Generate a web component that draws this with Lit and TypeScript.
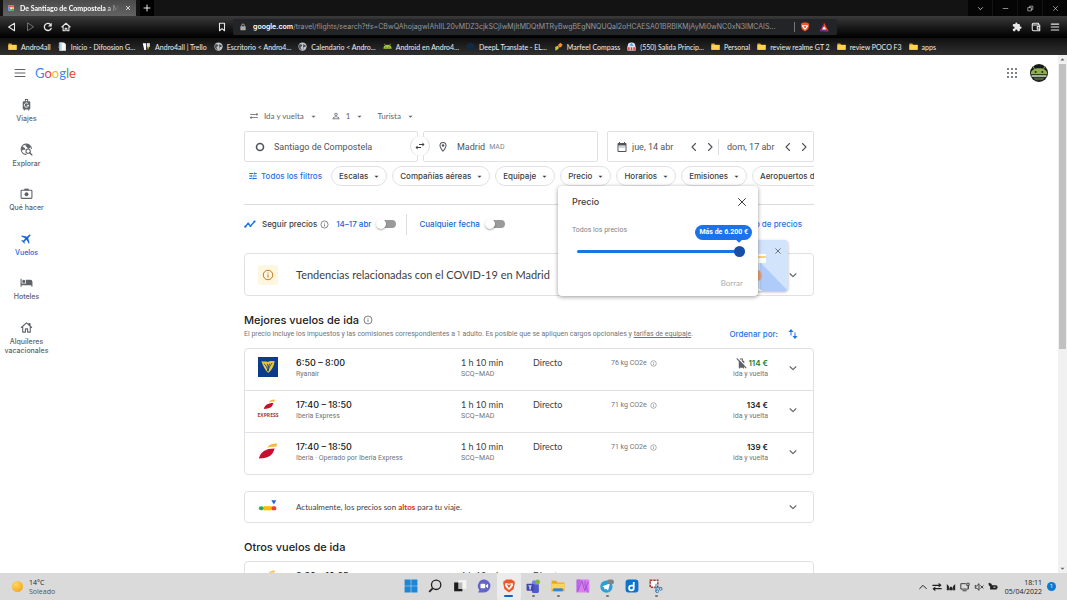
import { LitElement, html, css, svg, nothing } from "lit";
import { customElement, property } from "lit/decorators.js";
import { classMap } from "lit/directives/class-map.js";

const line = (d: string, w = 2) =>
  svg`<path d=${d} fill="none" stroke="currentColor" stroke-width=${w} stroke-linecap="round" stroke-linejoin="round"/>`;
const fill = (d: string, c = "currentColor") => svg`<path d=${d} fill=${c}/>`;

const folder = svg`<path d="M1 4h8l2 3h12v13H1z" fill="#e0a92e"/><path d="M1 8h22v13H1z" fill="#fcd34f"/>`;
const globe = svg`<circle cx="12" cy="12" r="11" fill="#c4c7ca"/><path d="M4 6c5 0 8 1 7 4s-5 2-4 5 3 3 3 6c-5-1-8-5-8-9zM14 3c0 3 2 4 5 4l2 5c-2 2-4 0-6 2s1 5-2 7" fill="#4c5054"/>`;

const icons: Record<string, unknown> = {
  maps: svg`<rect x="1" y="1" width="22" height="22" rx="5" fill="#f4f4f4"/><path d="M1 6a5 5 0 0 1 5-5h12a5 5 0 0 1 5 5v3H1z" fill="#e05548"/><path d="M1 9h8v14H6a5 5 0 0 1-5-5z" fill="#4a8df0"/><path d="M9 16h14v2a5 5 0 0 1-5 5H9z" fill="#3eaa5b"/><path d="M16 9h7v7h-7z" fill="#f2c343"/>`,
  close: line("M5 5l14 14M19 5L5 19"),
  closeBold: line("M5 5l14 14M19 5L5 19", 3.5),
  plus: line("M12 3v18M3 12h18", 3),
  chevron: line("M5 9l7 7 7-7", 2.6),
  minus: line("M4 12h16"),
  restore: line("M4 9h11v11H4zM9 9V4h11v11h-5"),
  back: line("M18 3v18L4 12z", 2.6),
  forward: line("M6 3v18l14-9z", 2.2),
  reload: svg`${line("M19.500 15.500A8.500 8.500 0 1 1 18 6", 3.2)}${fill("M21 2v9h-9z")}`,
  home: line("M2 12L12 3l10 9M5 10v11h5v-6h4v6h5V10", 2.6),
  bookmark: line("M6 3h12v18l-6-5-6 5z", 2.6),
  lock: svg`<rect x="4" y="10" width="16" height="12" rx="1.500" fill="currentColor"/>${line("M8 10V7a4 4 0 0 1 8 0v3", 2.6)}`,
  brave: svg`<path d="M7 1h10l2 2h2l1 4-2 10-8 6-8-6L2 7l1-4h2z" fill="#f1562b"/><path d="M6 7l6 1 6-1 1 4-3 4-4 4-4-4-3-4z" fill="#fff"/><path d="M8 9l4 7 4-7-4 1z" fill="#f1562b"/>`,
  bat: svg`<path d="M12 2L1 22h11z" fill="#9e1f63"/><path d="M12 2l11 20H12z" fill="#ff4724"/><path d="M1 22h22l-11-6z" fill="#662d91"/><path d="M12 10l5 8H7z" fill="#fff"/>`,
  puzzle: fill("M20.500 11H19V7c0-1.100-.9-2-2-2h-4V3.500a2.500 2.500 0 0 0-5 0V5H4c-1.100 0-2 .9-2 2v3.800h1.500a2.700 2.700 0 0 1 0 5.400H2V20c0 1.100.9 2 2 2h3.800v-1.500a2.700 2.700 0 0 1 5.400 0V22H17c1.100 0 2-.9 2-2v-4h1.500a2.500 2.500 0 0 0 0-5z"),
  wallet: line("M3 6c0-2 1-3 3-3h12v4M3 6v12c0 2 1 3 3 3h15V7H4M21 11h-6v6h6", 2.6),
  menu: line("M3 5h18M3 12h18M3 19h18", 2.6),
  hamburger: line("M2 5h20M2 12h20M2 19h20", 2),
  folder,
  globe,
  page: svg`<path d="M4 1h12l5 5v17H4z" fill="#f5f7f9"/><path d="M4 1h6v22H4z" fill="#b9d6e6"/><path d="M1 4h3v2H1zM1 9h3v2H1zM1 14h3v2H1z" fill="#9aa"/>`,
  trello: svg`<path d="M2 3h9v18H6z" fill="#fff"/><path d="M13 3h8v10h-8z" fill="#dedede"/><path d="M14 13h5l-3 9z" fill="#c6c32d"/>`,
  android: svg`<path d="M1 18a11 11 0 0 1 22 0z" fill="#a5c63b"/><path d="M6 9L4 5M18 9l2-4" stroke="#a5c63b" stroke-width="2"/><circle cx="8" cy="14" r="1.300" fill="#222"/><circle cx="16" cy="14" r="1.300" fill="#222"/>`,
  deepl: svg`<path d="M12 1l10 6v10l-10 6-10-6V7z" fill="#0f2b46"/>`,
  marfeel: svg`<path d="M11 7l6-5 6 5-4 7-7-1z" fill="#f4902c"/><path d="M3 13l7-3 4 5-4 4-6 4z" fill="#b6cf3a"/><path d="M11 11l5 2-4 4z" fill="#d84b2c"/>`,
  mail: svg`<path d="M2 10a10 9 0 0 1 20 0v4H2z" fill="#dbe9f7"/><path d="M6 10l6-8 6 8z" fill="#5b9bd5"/><path d="M1 12h22v11H1z" fill="#e9dede"/><path d="M3 14h4v7H3zM10 14h4v7h-4zM17 14h4v7h-4z" fill="#d9393e"/>`,
  apps: svg`${[4, 12, 20].map((y) => [4, 12, 20].map((x) => svg`<circle cx=${x} cy=${y} r="2.200" fill="currentColor"/>`))}`,
  avatar: svg`<circle cx="12" cy="12" r="12" fill="#16181a"/><path d="M1 13.500C1 8 6 5.500 12 5.500S23 8 23 13.500z" fill="#8fb04f"/><path d="M6 6.500L4 3M18 6.500L20 3" stroke="#8fb04f" stroke-width="1.300"/><circle cx="7.500" cy="10.500" r="1.300" fill="#16181a"/><circle cx="16.500" cy="10.500" r="1.300" fill="#16181a"/><path d="M2 15h20v2H2z" fill="#d5e3cb"/><path d="M4 18h16l-3 3.500H7z" fill="#4a5c34"/>`,
  luggage: svg`<path d="M9 2h6v4h2a2 2 0 0 1 2 2v11a2 2 0 0 1-2 2v2h-2v-2H9v2H7v-2a2 2 0 0 1-2-2V8a2 2 0 0 1 2-2h2zm1.800 1.800V6h2.400V3.800z" fill="currentColor" fill-rule="evenodd"/><path d="M15 10.500A4 4 0 1 0 16 13.500h-3.500" fill="none" stroke="#fff" stroke-width="1.800"/>`,
  explore: svg`${line("M11 21A9.500 9.500 0 1 1 21 10", 2)}${fill("M4 6l5 3 1 4-3-1-2 2-3-2zM12 2l-2 3 3 3 2 3 5-3-2-4-4-2z")}<circle cx="15" cy="15" r="4" fill="#fff" stroke="currentColor" stroke-width="2"/>${line("M18 18l4 4", 2.4)}`,
  camera: svg`<rect x="2" y="6" width="20" height="15" rx="1.500" fill="none" stroke="currentColor" stroke-width="2"/><path d="M8 3h8v3H8z" fill="currentColor"/><circle cx="12" cy="13.500" r="3.600" fill="currentColor"/>`,
  plane: svg`<g transform="rotate(45 12 12)"><path d="M22 16v-2l-8.500-5V3.500a1.500 1.500 0 0 0-3 0V9L2 14v2l8.500-2.500V19L8 20.500V22l4-1 4 1v-1.500L13.500 19v-5.500z" fill="currentColor"/></g>`,
  hotel: fill("M7 13a3 3 0 1 0 0-6 3 3 0 0 0 0 6zm12-6h-8v7H3V5H1v15h2v-3h18v3h2v-9a4 4 0 0 0-4-4z"),
  rental: svg`${line("M2.500 12L12 3.500l9.500 8.500M5 10v10.500h5v-6h4v6h5V10M16.500 7V4.500h2V9", 2)}`,
  sync: fill("M22 8l-4-4v3H3v2h15v3zM2 16l4 4v-3h15v-2H6v-3z"),
  person: fill("M12 5.900a2.100 2.100 0 1 1 0 4.200 2.100 2.100 0 0 1 0-4.200m0 9c2.970 0 6.100 1.460 6.100 2.100v1.100H5.900V17c0-.64 3.130-2.100 6.100-2.100M12 4a4 4 0 1 0 0 8 4 4 0 0 0 0-8zm0 9c-2.670 0-8 1.340-8 4v3h16v-3c0-2.660-5.330-4-8-4z"),
  caret: fill("M5 9l7 7 7-7z"),
  origin: svg`<circle cx="12" cy="12" r="7" fill="none" stroke="currentColor" stroke-width="3.200"/>`,
  swap: fill("M6.990 11L3 15l3.990 4v-3H14v-2H6.990zM21 9l-3.990-4v3H10v2h7.010v3z"),
  place: svg`${fill("M12 2a7 7 0 0 0-7 7c0 5.250 7 13 7 13s7-7.750 7-13a7 7 0 0 0-7-7zM7 9a5 5 0 0 1 10 0c0 2.880-2.880 7.190-5 9.880C9.920 16.210 7 11.850 7 9z")}<circle cx="12" cy="9" r="2.500" fill="currentColor"/>`,
  calendar: fill("M19 4h-1V2h-2v2H8V2H6v2H5a2 2 0 0 0-2 2v14a2 2 0 0 0 2 2h14a2 2 0 0 0 2-2V6a2 2 0 0 0-2-2zm0 16H5V9h14zM7 11h2v2H7zm4 0h2v2h-2zm4 0h2v2h-2z"),
  prev: line("M15 5l-7 7 7 7", 2.2),
  next: line("M9 5l7 7-7 7", 2.2),
  tune: fill("M3 17v2h6v-2zM3 5v2h10V5zm10 16v-2h8v-2h-8v-2h-2v6zM7 9v2H3v2h4v2h2V9zm14 4v-2H11v2zm-6-4h2V7h4V5h-4V3h-2z"),
  trend: svg`${line("M2 18l6-7 5 5 8-9", 2.6)}<circle cx="3" cy="17" r="2.200" fill="currentColor"/><circle cx="8.500" cy="11" r="2.200" fill="currentColor"/><circle cx="13" cy="16" r="2.200" fill="currentColor"/><circle cx="21" cy="7" r="2.200" fill="currentColor"/>`,
  info: svg`<circle cx="12" cy="12" r="9.500" fill="none" stroke="currentColor" stroke-width="2"/><path d="M11 11h2v6h-2zM11 7h2v2h-2z" fill="currentColor"/>`,
  sort: svg`${fill("M8 2L3 8h4v7h2V8h4zM16 22l5-6h-4V9h-2v7h-4z")}`,
  noBag: svg`<path d="M8 1h7v5h3v15h-1v2h-2v-2H9v2H7v-2H6V6h2zm2 2v3h3V3z" fill="currentColor" fill-rule="evenodd"/><path d="M4 0l20 20" stroke="#fff" stroke-width="2.500"/><path d="M1.500 1l21 21" stroke="currentColor" stroke-width="2.400"/>`,
  ryanair: svg`<rect width="24" height="24" fill="#0b3c8c"/><path d="M4 5c3 1 5 0 8 1 3-2 6-1 8-1-1 6-4 12-8 14-3-3-6-8-8-14z" fill="#e9c63a"/><path d="M7 8c3 2 4 5 5 9M11 8c1 3 2 5 1 9M17 7c-2 3-4 5-5 10M14 8l-2 5" stroke="#0b3c8c" stroke-width="1" fill="none"/>`,
  express: svg`<path d="M4 17c1-6 7-10 16-10-1 7-6 10-16 10z" fill="#c8102e"/><path d="M12 6c2-3 5-5 11-5l-1 3.500c-3-.5-6 0-10 1.500z" fill="#f7b83c"/>`,
  iberia: svg`<path d="M1 21c2-8 8-12 19-12-2 7-6 12-19 12z" fill="#c8102e"/><path d="M11 8c3-4 6-5 12-5l-1 4c-4-.5-7 0-11 1z" fill="#f7b83c"/>`,
  gauge: svg`<rect x="1" y="11" width="6" height="5" rx="2.500" fill="#34a853"/><rect x="7" y="11" width="9" height="5" fill="#fbbc04"/><rect x="16" y="11" width="6" height="5" rx="2" fill="#ea4335"/><path d="M16 4h6l-3 5z" fill="#1967d2"/>`,
  windows: svg`<path d="M1 1h10.500v10.500H1zM12.500 1H23v10.500H12.500zM1 12.500h10.500V23H1zM12.500 12.500H23V23H12.500z" fill="#1b87d6"/>`,
  search: svg`<circle cx="14" cy="10" r="8" fill="none" stroke="#222" stroke-width="2.200"/><path d="M8 16l-6 6" stroke="#222" stroke-width="3"/>`,
  tasks: svg`<path d="M9 2h14v15H9z" fill="#f4f4f4"/><path d="M2 6h14v15H2z" fill="#bbb"/><path d="M2 6h7v11h7v4H2z" fill="#1d1d1d"/>`,
  chat: svg`<path d="M12 1a11 11 0 0 1 0 22H2l2-4A11 11 0 0 1 12 1z" fill="#6264c7"/><rect x="6" y="8" width="8" height="8" rx="1.500" fill="#fff"/><path d="M15 11l4-3v8l-4-3z" fill="#fff"/>`,
  teams: svg`<circle cx="14" cy="6" r="4" fill="#7b83eb"/><path d="M8 9h14v9a6 6 0 0 1-12 3z" fill="#5059c9"/><rect x="1" y="8" width="12" height="12" rx="1" fill="#4048b0"/><path d="M4 11h6v1.500H8V18H6v-5.500H4z" fill="#fff"/><circle cx="20" cy="5" r="4" fill="#7fba28"/>`,
  explorer: svg`<path d="M1 3h8l2 3h12v15H1z" fill="#e8a71f"/><path d="M1 8h22v9H1z" fill="#fcd45a"/><path d="M4 16h16v5H4z" fill="#2a86d8"/>`,
  affinity: svg`<rect x="1" y="1" width="22" height="22" rx="2" fill="#dd7df0"/><path d="M1 1h7L3 23H1zM16 1l6 22h-3L13 8z" fill="#b46ae6"/><path d="M3 21L10 3l5 17 6-15" fill="none" stroke="#8a46c4" stroke-width="1.200"/>`,
  telegram: svg`<circle cx="11" cy="13" r="10.500" fill="#2b9fd9"/><path d="M4 12.500l13-5-3 12-4-3-2 2-1-4z" fill="#fff"/><rect x="12" y="1" width="12" height="8" rx="4" fill="#7d858b"/>`,
  dapp: svg`<rect x="1" y="1" width="22" height="22" rx="5" fill="#0b72d0"/><path d="M15 5v10.500a4 4 0 1 1-4-4h4" fill="none" stroke="#fff" stroke-width="3"/>`,
  snip: svg`<rect x="2" y="2" width="13" height="12" fill="#fff" stroke="#a7332a" stroke-width="2.500" stroke-dasharray="4 1.500"/><path d="M12 8v14M8 15h14" stroke="#4d8fc0" stroke-width="2"/><circle cx="20" cy="17" r="2.500" fill="none" stroke="#2978b5" stroke-width="1.500"/><circle cx="14" cy="21" r="2.500" fill="none" stroke="#2978b5" stroke-width="1.500"/>`,
  up: line("M4 16l8-8 8 8", 2.4),
  arrows: svg`${line("M2 8h17M5 16h17", 3)}${fill("M16 2l7 6-7 5zM8 11l-7 5 7 6z")}`,
  mstat: fill("M2 5l5 5v10H2zM22 5l-5 5v10h5zM8 14l4-3 4 3v6H8z"),
  monitor: svg`${line("M13 4H2v13h18v-6M7 21h8", 2)}${line("M17 3h5v5h-5zM19.500 8v5", 1.800)}`,
  mute: line("M3 9v6h4l5 5V4L7 9zM16 9l6 6M22 9l-6 6", 2),
  battery: svg`<path d="M5 8h16v2h2v5h-2v3H5z" fill="#222"/><path d="M1 3l4-1 1 2h3v5c-3 2-6 1-7-1z" fill="#222"/><path d="M13 11h5v3h-5z" fill="#bbb"/>`,
};

@customElement("ui-icon")
class UiIcon extends LitElement {
  static styles = css`
    :host { display: inline-flex; flex: none; width: 10px; height: 10px; }
    svg { width: 100%; height: 100%; display: block; }
  `;
  @property() name = "";
  render() {
    return html`<svg viewBox="0 0 24 24" aria-hidden="true">${icons[this.name] ?? nothing}</svg>`;
  }
}

const bookmarks: [string, string][] = [
  ["folder", "Andro4all"],
  ["page", "Inicio - Difoosion G..."],
  ["trello", "Andro4all | Trello"],
  ["globe", "Escritorio < Andro4..."],
  ["globe", "Calendario < Andro..."],
  ["android", "Android en Andro4..."],
  ["deepl", "DeepL Translate - EL..."],
  ["marfeel", "Marfeel Compass"],
  ["mail", "(550) Salida Princip..."],
  ["folder", "Personal"],
  ["folder", "review realme GT 2"],
  ["folder", "review POCO F3"],
  ["folder", "apps"],
];

@customElement("browser-chrome")
class BrowserChrome extends LitElement {
  static styles = css`
    :host { display: block; flex: none; color: #e8e8e8; font: 7px/10px Lato, "Noto Sans", sans-serif; }
    button { all: unset; box-sizing: border-box; display: inline-flex; align-items: center; justify-content: center; }
    .tabs { display: flex; height: 16px; background: #131313; }
    .tab { display: flex; align-items: center; gap: 6px; width: 133px; margin-left: 3px; padding: 0 5px; box-sizing: border-box; background: linear-gradient(#4a4a4a, #636363); }
    .tab ui-icon { width: 6px; height: 6px; }
    .tab-title { flex: 1; overflow: hidden; white-space: nowrap; color: #fff; font-weight: 700; mask-image: linear-gradient(90deg, #000 85%, transparent); }
    .new-tab { width: 14px; margin-left: 4px; background: #000; }
    .new-tab ui-icon { width: 8px; height: 8px; }
    .win { margin-left: auto; display: flex; background: #050505; }
    .win button { width: 25px; border-left: 1px solid #141414; }
    .win ui-icon { width: 7px; height: 7px; }
    .toolbar { display: flex; align-items: center; height: 22px; background: linear-gradient(#3a3a3a, #141414 60%, #000); }
    .nav-buttons { display: flex; gap: 8px; padding-left: 7px; width: 210px; box-sizing: border-box; }
    .nav-buttons button, .actions button { width: 10px; height: 12px; }
    .dim { color: #777; }
    .mark { width: 23px; }
    .omnibox { flex: 1; min-width: 0; height: 16px; margin-right: 175px; padding: 0 6px; gap: 6px; border-radius: 2px; background: #232427; display: flex; align-items: center; font: 7px/12px Inter, sans-serif; }
    .omnibox ui-icon { width: 8px; height: 8px; color: #aaa; }
    .omnibox .url { flex: 1; min-width: 0; justify-content: flex-start; overflow: hidden; white-space: nowrap; color: #96989b; }
    .url b { color: #fff; font-weight: 600; }
    .shields { display: flex; gap: 9px; padding: 0 2px 0 5px; border-left: 1px solid #777; }
    .omnibox .shields ui-icon { width: 10px; height: 10px; }
    .actions { display: flex; gap: 9px; padding-right: 7px; }
    .marks { display: flex; align-items: center; gap: 7px; height: 17px; padding: 0 8px; box-sizing: border-box; background: linear-gradient(#101010, #303030); overflow: hidden; }
    .marks a { display: flex; align-items: center; gap: 4px; color: #eee; text-decoration: none; white-space: nowrap; }
    .marks ui-icon { width: 9px; height: 9px; }
  `;
  render() {
    return html`
      <div class="tabs">
        <div class="tab">
          <ui-icon name="maps"></ui-icon>
          <span class="tab-title">De Santiago de Compostela a Madrid</span>
          <button aria-label="Cerrar pestaña"><ui-icon name="closeBold"></ui-icon></button>
        </div>
        <button class="new-tab" aria-label="Nueva pestaña"><ui-icon name="plus"></ui-icon></button>
        <div class="win">
          <button aria-label="Buscar pestañas"><ui-icon name="chevron"></ui-icon></button>
          <button aria-label="Minimizar"><ui-icon name="minus"></ui-icon></button>
          <button aria-label="Restaurar"><ui-icon name="restore"></ui-icon></button>
          <button aria-label="Cerrar"><ui-icon name="close"></ui-icon></button>
        </div>
      </div>
      <div class="toolbar">
        <div class="nav-buttons">
          <button aria-label="Atrás"><ui-icon name="back"></ui-icon></button>
          <button class="dim" aria-label="Adelante"><ui-icon name="forward"></ui-icon></button>
          <button aria-label="Recargar"><ui-icon name="reload"></ui-icon></button>
          <button aria-label="Inicio"><ui-icon name="home"></ui-icon></button>
        </div>
        <button class="mark" aria-label="Añadir a marcadores"><ui-icon name="bookmark"></ui-icon></button>
        <div class="omnibox">
          <ui-icon name="lock"></ui-icon>
          <button class="url"><b>google.com</b>/travel/flights/search?tfs=CBwQAhojagwIAhIIL20vMDZ3cjkSCjIwMjItMDQtMTRyBwgBEgNNQUQaI2oHCAESA01BRBIKMjAyMi0wNC0xN3IMCAIS...</button>
          <span class="shields"><ui-icon name="brave"></ui-icon><ui-icon name="bat"></ui-icon></span>
        </div>
        <div class="actions">
          <button aria-label="Extensiones"><ui-icon name="puzzle"></ui-icon></button>
          <button aria-label="Cartera"><ui-icon name="wallet"></ui-icon></button>
          <button aria-label="Menú"><ui-icon name="menu"></ui-icon></button>
        </div>
      </div>
      <nav class="marks">
        ${bookmarks.map(([i, t]) => html`<a href="#"><ui-icon name=${i}></ui-icon>${t}</a>`)}
      </nav>
    `;
  }
}

@customElement("task-bar")
class TaskBar extends LitElement {
  static styles = css`
    :host { display: grid; grid-template-columns: 1fr 270px 1fr; align-items: center; flex: none; height: 27px; background: #dadada; color: #222; font: 7px/9px "Open Sans", "Noto Sans", sans-serif; }
    button { all: unset; }
    .weather { display: flex; align-items: center; gap: 6px; padding-left: 12px; }
    .sun { width: 11px; height: 11px; border-radius: 50%; background: radial-gradient(circle at 35% 30%, #ffd75a, #f49a10); }
    .muted { color: #555; }
    .apps { display: grid; grid-template-columns: repeat(11, 1fr); height: 27px; }
    .app { display: flex; flex-direction: column; align-items: center; justify-content: flex-end; gap: 2px; padding-bottom: 3px; box-sizing: border-box; }
    .app ui-icon { width: 14px; height: 14px; }
    .app::after { content: ""; width: 3px; height: 2px; border-radius: 1px; }
    .open::after { background: #777; }
    .active { background: #ececec; border-radius: 2px; }
    .active::after { width: 9px; background: #0b66c3; }
    .tray { display: flex; align-items: center; justify-content: flex-end; gap: 4px; padding-right: 11px; }
    .clock { text-align: right; margin: 0 1px 0 3px; }
    .badge { width: 9px; height: 9px; border-radius: 50%; background: #0a79d0; color: #fff; text-align: center; font-size: 6px; }
  `;
  render() {
    const apps: [string, string, string][] = [
      ["windows", "Inicio", ""], ["search", "Buscar", ""], ["tasks", "Vista de tareas", ""], ["chat", "Chat", ""],
      ["brave", "Brave", "active"], ["teams", "Teams", "open"], ["explorer", "Explorador", "open"], ["affinity", "Affinity Photo", ""],
      ["telegram", "Telegram", "open"], ["dapp", "Música", ""], ["snip", "Recortes", "open"],
    ];
    return html`
      <div class="weather"><span class="sun"></span><div>14°C<div class="muted">Soleado</div></div></div>
      <div class="apps">${apps.map(([i, label, c]) => html`<button class=${classMap({ app: true, open: c === "open", active: c === "active" })} aria-label=${label}><ui-icon name=${i}></ui-icon></button>`)}</div>
      <div class="tray">
        ${["up", "arrows", "mstat", "monitor", "mute", "battery"].map((i) => html`<ui-icon name=${i}></ui-icon>`)}
        <div class="clock">18:11<div>05/04/2022</div></div>
        <span class="badge">1</span>
      </div>
    `;
  }
}

const destinations: [string, string][] = [
  ["luggage", "Viajes"], ["explore", "Explorar"], ["camera", "Qué hacer"], ["plane", "Vuelos"], ["hotel", "Hoteles"], ["rental", "Alquileres vacacionales"],
];

const flights = [
  { logo: "ryanair", time: "6:50 – 8:00", carrier: "Ryanair", co2: "76 kg CO2e", price: "114 €", low: true },
  { logo: "express", time: "17:40 – 18:50", carrier: "Iberia Express", co2: "71 kg CO2e", price: "134 €", low: false },
  { logo: "iberia", time: "17:40 – 18:50", carrier: "Iberia · Operado por Iberia Express", co2: "71 kg CO2e", price: "139 €", low: false },
];
const others = [
  { logo: "express", time: "8:30 – 10:35", carrier: "Iberia Express", co2: "71 kg CO2e", price: "134 €", low: false },
];

@customElement("app-root")
class AppRoot extends LitElement {
  static styles = css`
    :host { --display: Lato, "Open Sans", sans-serif; --medium: Inter, "Open Sans", sans-serif; display: flex; flex-direction: column; height: 100vh; overflow: hidden; background: #fff; color: #3c4043; font: 8px/12px var(--display); }
    button { all: unset; box-sizing: border-box; display: inline-flex; align-items: center; justify-content: center; }
    h2, p { margin: 0; font-weight: 400; }
    input { font: inherit; color: inherit; margin: 0; }
    .viewport { flex: 1; min-height: 0; display: flex; }
    .page { flex: 1; min-width: 0; overflow: hidden; }
    .scroll { width: 9px; background: #f1f1f1; display: flex; flex-direction: column; align-items: center; color: #666; }
    .scroll ui-icon { width: 7px; height: 9px; }
    .thumb-area { flex: 1; width: 7px; }
    .thumb { height: 57%; background: #c1c1c1; }
    .flip { transform: rotate(180deg); }

    .top { display: flex; align-items: center; height: 36px; padding: 0 10px 0 14px; gap: 9px; }
    .top ui-icon { width: 12px; height: 12px; color: #5f6368; }
    .logo { flex: 1; font-size: 13px; line-height: 18px; text-decoration: none; }
    .b { color: #4285f4; } .r { color: #ea4335; } .y { color: #fbbc05; } .g { color: #34a853; }
    .top .avatar { width: 18px; height: 18px; margin-left: 3px; }

    .layout { display: grid; grid-template-columns: 53px minmax(0, 570px) 53px; justify-content: space-between; }
    .side { display: grid; grid-template-rows: repeat(6, 1fr); height: 267px; padding-top: 7px; }
    .side a { display: flex; flex-direction: column; align-items: center; gap: 3px; color: #5f6368; text-decoration: none; font: 500 7px/9px var(--medium); text-align: center; }
    .side ui-icon { width: 13px; height: 13px; }
    .side .on { color: #1a66d8; }

    .options { display: flex; gap: 14px; height: 20px; margin: 15px 0 5px 5px; color: #5f6368; }
    .options button { gap: 5px; }
    .options .caret { margin-left: 1px; }
    .caret { width: 7px; height: 7px; }
    .search { display: grid; grid-template-columns: 174fr 175fr 211fr; column-gap: 5px; height: 31px; }
    .field { display: flex; align-items: center; border: 1px solid #dfe1e5; border-radius: 2px; font: 9px/12px Roboto, sans-serif; box-sizing: border-box; min-width: 0; color: #50545a; }
    .field input { border: 0; padding: 0; outline: 0; background: none; field-sizing: content; }
    .from { padding-left: 9px; gap: 8px; }
    .to { padding-left: 13px; gap: 8px; position: relative; }
    .to small { font-size: 7px; color: #80868b; margin-left: -4px; }
    .swap { position: absolute; left: -14px; top: 4px; width: 20px; height: 20px; border-radius: 50%; background: #fff; border-left: 1px solid #dadce0; border-right: 1px solid #dadce0; color: #3c4043; }
    .swap ui-icon, .field ui-icon { width: 12px; height: 12px; }
    .dates { margin-left: 4px; display: grid; grid-template-columns: 110fr 95fr; }
    .date { display: flex; align-items: center; padding: 0 2px 0 8px; gap: 4px; min-width: 0; }
    .date + .date { border-left: 1px solid #dadce0; height: 16px; padding-right: 3px; }
    .field .date input { field-sizing: fixed; flex: 1; min-width: 0; width: 40px; }

    .filters-wrap { position: relative; margin-top: 4px; }
    .filters { display: flex; align-items: center; gap: 5px; overflow: hidden; }
    .filters button { flex: none; white-space: nowrap; font: 500 8px/12px var(--medium); }
    .filters .all { color: #1a73e8; gap: 3px; width: 82px; }
    .filters .pill { height: 20px; border: 1px solid #dfe1e5; border-radius: 10px; padding: 0 6px 0 7px; gap: 5px; }
    .popover { position: absolute; z-index: 3; left: 314px; top: 20px; width: 200px; box-sizing: border-box; background: #fff; border-radius: 4px; box-shadow: 0 1px 4px rgba(0,0,0,.4); padding: 9px 13px 7px 14px; height: 110px; display: flex; flex-direction: column; }
    .pop-head { display: flex; justify-content: space-between; align-items: center; font: 500 9px/14px var(--medium); height: 14px; }
    .pop-head ui-icon { width: 12px; height: 12px; margin-right: -3px; }
    .pop-label { font: 7px/10px Roboto, sans-serif; color: #80868b; margin-top: 16px; }
    .slider { position: relative; margin: 10px 0 0 5px; height: 12px; display: flex; }
    .slider input { appearance: none; width: 100%; height: 12px; background: none; }
    .slider input::-webkit-slider-runnable-track { height: 3px; border-radius: 2px; background: #1a73e8; }
    .slider input::-webkit-slider-thumb { appearance: none; width: 11px; height: 11px; margin-top: -4px; border-radius: 50%; background: #174ea6; }
    .bubble { position: absolute; right: -7px; bottom: 17px; padding: 1px 4px; border-radius: 8px; background: #1a73e8; color: #fff; font: 700 7px/13px Roboto, sans-serif; white-space: nowrap; }
    .bubble::after { content: ""; position: absolute; right: 11px; bottom: -2px; width: 4px; height: 4px; background: #1a73e8; transform: rotate(45deg); }
    .clear { margin-top: auto; align-self: flex-end; color: #aaadb0; padding-right: 2px; }

    .track { position: relative; display: flex; align-items: center; margin-top: 18px; padding-right: 12px; height: 39px; border-top: 1px solid #dadce0; box-sizing: border-box; font: 500 8px/12px var(--medium); }
    .track > ui-icon { width: 12px; height: 12px; color: #1a73e8; margin-right: 6px; }
    .track .info { width: 9px; height: 9px; margin: 0 7px 0 3px; color: #5f6368; }
    .blue { color: #1a73e8; text-decoration: none; }
    .switch { display: flex; align-items: center; gap: 6px; color: #1967d2; }
    .switch input { appearance: none; width: 19px; height: 8px; border-radius: 4px; background: linear-gradient(90deg, transparent 6px, #9a9a9a 6px); position: relative; }
    .switch input::before { content: ""; position: absolute; left: -1px; top: -1px; width: 10px; height: 10px; border-radius: 50%; background: #fff; box-shadow: 0 1px 2px rgba(0,0,0,.35); }
    .bar { width: 1px; height: 21px; background: #dadce0; margin: 0 12px 0 10px; }
    .track .end { margin-left: auto; }
    .promo { position: absolute; z-index: 2; right: 26px; top: 35px; width: 60px; height: 51px; border-radius: 4px; background: #d2e3fc; box-shadow: 0 1px 3px rgba(0,0,0,.3); overflow: hidden; display: flex; justify-content: flex-end; align-items: flex-start; }
    .promo svg { position: absolute; inset: 0; width: 100%; height: 100%; }
    .promo button { position: relative; padding: 7px 6px; }
    .promo ui-icon { width: 8px; height: 8px; }

    .card { border: 1px solid #dfe1e5; border-radius: 4px; }
    .notice { display: grid; grid-template-columns: 51px 1fr 41px; align-items: center; box-sizing: border-box; }
    .notice > :first-child { margin-left: 13px; }
    .chev { justify-self: center; width: 10px; height: 10px; color: #5f6368; }
    .covid { margin-top: 10px; height: 43px; font-size: 11px; }
    .warn { display: flex; align-items: center; justify-content: center; width: 20px; height: 20px; background: #fef7e0; border-radius: 2px; color: #c5761d; }
    .warn ui-icon { width: 12px; height: 12px; }
    h2 { font: 500 11px/16px var(--medium); color: #202124; display: flex; align-items: center; gap: 4px; }
    h2 ui-icon { color: #5f6368; }
    .best { margin-top: 16px; }
    .note { display: flex; align-items: center; justify-content: space-between; height: 10px; margin-top: 1px; padding-right: 15px; }
    .note p { font: 7px/10px Roboto, sans-serif; color: #70757a; }
    .note a { color: inherit; }
    .note button { gap: 9px; color: #1a73e8; font: 500 8px/10px var(--medium); }
    .note ui-icon { width: 12px; height: 12px; }
    .list { margin: 9px 0 0; list-style: none; padding: 0; }
    .row { display: grid; grid-template-columns: 51px 165px 72px 78px 1fr 1fr 45px; height: 41px; padding-top: 8px; box-sizing: border-box; font-size: 9px; }
    .row + .row { border-top: 1px solid #dfe1e5; height: 42px; }
    .row .sub { font: 7px/11px Roboto, sans-serif; color: #70757a; }
    .row .time { font: 500 9px/12px var(--medium); color: #202124; }
    .airline { display: flex; flex-direction: column; align-items: center; width: 20px; margin-left: 13px; font: 700 5px/5px "Open Sans", sans-serif; color: #a33a3a; }
    .airline ui-icon { width: 20px; height: 20px; }
    .airline .small { width: 17px; height: 14px; }
    .row .co2 { display: flex; align-items: center; gap: 3px; height: 12px; }
    .co2 ui-icon { width: 7px; height: 7px; }
    .cost { text-align: right; }
    .price { display: flex; justify-content: flex-end; align-items: center; gap: 1px; font: 600 8px/12px var(--medium); color: #202124; }
    .price ui-icon { width: 11px; height: 11px; color: #5f6368; }
    .price.low { color: #188038; }
    .row .chev { align-self: center; margin: -11px 0 0 4px; }
    .level { margin-top: 16px; height: 32px; }
    .level > ui-icon { width: 20px; height: 20px; }
    .level b { color: #d93025; }
    .other { margin-top: 16px; }
    .more { margin-top: 6px; }
  `;

  flight(f: (typeof flights)[number]) {
    const express = f.logo === "express";
    return html`<li class="row">
      <div class="airline"><ui-icon class=${classMap({ small: express })} name=${f.logo}></ui-icon>${express ? "EXPRESS" : nothing}</div>
      <div><div class="time">${f.time}</div><div class="sub">${f.carrier}</div></div>
      <div>1 h 10 min<div class="sub">SCQ–MAD</div></div>
      <div>Directo</div>
      <div class="sub co2">${f.co2}<ui-icon name="info"></ui-icon></div>
      <div class="cost">
        <div class=${classMap({ price: true, low: f.low })}>${f.low ? html`<ui-icon name="noBag"></ui-icon>` : nothing}${f.price}</div>
        <div class="sub">ida y vuelta</div>
      </div>
      <button class="chev" aria-label="Detalles del vuelo"><ui-icon name="chevron"></ui-icon></button>
    </li>`;
  }

  pill(label: string) {
    return html`<button class="pill">${label}<ui-icon class="caret" name="caret"></ui-icon></button>`;
  }

  date(value: string, name: string, icon: boolean) {
    return html`<div class="date">
      ${icon ? html`<ui-icon name="calendar"></ui-icon>` : nothing}
      <input aria-label=${name} .value=${value} />
      <button aria-label="Día anterior"><ui-icon name="prev"></ui-icon></button>
      <button aria-label="Día siguiente"><ui-icon name="next"></ui-icon></button>
    </div>`;
  }

  render() {
    return html`
      <browser-chrome></browser-chrome>
      <div class="viewport">
        <div class="page">
          <header class="top">
            <button aria-label="Menú principal"><ui-icon name="hamburger"></ui-icon></button>
            <a class="logo" href="#" aria-label="Google"><span class="b">G</span><span class="r">o</span><span class="y">o</span><span class="b">g</span><span class="g">l</span><span class="r">e</span></a>
            <button aria-label="Aplicaciones"><ui-icon name="apps"></ui-icon></button>
            <button aria-label="Cuenta"><ui-icon class="avatar" name="avatar"></ui-icon></button>
          </header>
          <div class="layout">
            <nav class="side">
              ${destinations.map(([i, t]) => html`<a href="#" class=${classMap({ on: i === "plane" })}><ui-icon name=${i}></ui-icon>${t}</a>`)}
            </nav>
            <main>
              <div class="options">
                <button><ui-icon name="sync"></ui-icon>Ida y vuelta<ui-icon class="caret" name="caret"></ui-icon></button>
                <button><ui-icon name="person"></ui-icon>1<ui-icon class="caret" name="caret"></ui-icon></button>
                <button>Turista<ui-icon class="caret" name="caret"></ui-icon></button>
              </div>
              <div class="search">
                <label class="field from"><ui-icon name="origin"></ui-icon><input aria-label="Origen" .value=${"Santiago de Compostela"} /></label>
                <div class="field to">
                  <button class="swap" aria-label="Intercambiar origen y destino"><ui-icon name="swap"></ui-icon></button>
                  <ui-icon name="place"></ui-icon><input aria-label="Destino" .value=${"Madrid"} /><small>MAD</small>
                </div>
                <div class="field dates">${this.date("jue, 14 abr", "Salida", true)}${this.date("dom, 17 abr", "Vuelta", false)}</div>
              </div>
              <div class="filters-wrap">
                <div class="filters">
                  <button class="all"><ui-icon name="tune"></ui-icon>Todos los filtros</button>
                  ${["Escalas", "Compañías aéreas", "Equipaje", "Precio", "Horarios", "Emisiones", "Aeropuertos de conexión"].map((t) => this.pill(t))}
                </div>
                <section class="popover">
                  <div class="pop-head">Precio<button aria-label="Cerrar"><ui-icon name="close"></ui-icon></button></div>
                  <label class="pop-label" for="price">Todos los precios</label>
                  <div class="slider">
                    <input id="price" type="range" min="100" max="6200" value="6200" />
                    <output class="bubble" for="price">Más de 6.200 €</output>
                  </div>
                  <button class="clear">Borrar</button>
                </section>
              </div>
              <div class="track">
                <ui-icon name="trend"></ui-icon>Seguir precios<ui-icon class="info" name="info"></ui-icon>
                <label class="switch">14–17 abr<input type="checkbox" role="switch" /></label>
                <span class="bar"></span>
                <label class="switch">Cualquier fecha<input type="checkbox" role="switch" /></label>
                <a class="blue end" href="#">Gráfico de precios</a>
                <aside class="promo">
                  <svg viewBox="0 0 60 51" aria-hidden="true"><path d="M60 51L32 22v29z" fill="#aecbfa"/><path d="M20 14h18v9H20z" fill="#fff"/><path d="M26 16h12v2H26z" fill="#fbd37a"/><path d="M24 28c6 0 10 4 10 8s-4 6-10 6z" fill="#e8a27c"/><path d="M20 40l14 11H20z" fill="#fff"/></svg>
                  <button aria-label="Cerrar sugerencia"><ui-icon name="close"></ui-icon></button>
                </aside>
              </div>
              <div class="card notice covid">
                <span class="warn"><ui-icon name="info"></ui-icon></span>Tendencias relacionadas con el COVID-19 en Madrid
                <button class="chev" aria-label="Mostrar más"><ui-icon name="chevron"></ui-icon></button>
              </div>
              <h2 class="best">Mejores vuelos de ida<ui-icon name="info"></ui-icon></h2>
              <div class="note">
                <p>El precio incluye los impuestos y las comisiones correspondientes a 1 adulto. Es posible que se apliquen cargos opcionales y <a href="#">tarifas de equipaje</a>.</p>
                <button>Ordenar por:<ui-icon name="sort"></ui-icon></button>
              </div>
              <ul class="card list">${flights.map((f) => this.flight(f))}</ul>
              <div class="card notice level">
                <ui-icon name="gauge"></ui-icon><span>Actualmente, los precios son <b>altos</b> para tu viaje.</span>
                <button class="chev" aria-label="Mostrar historial de precios"><ui-icon name="chevron"></ui-icon></button>
              </div>
              <h2 class="other">Otros vuelos de ida</h2>
              <ul class="card list more">${others.map((f) => this.flight(f))}</ul>
            </main>
          </div>
        </div>
        <div class="scroll">
          <ui-icon class="flip" name="caret"></ui-icon>
          <div class="thumb-area"><div class="thumb"></div></div>
          <ui-icon name="caret"></ui-icon>
        </div>
      </div>
      <task-bar></task-bar>
    `;
  }
}
